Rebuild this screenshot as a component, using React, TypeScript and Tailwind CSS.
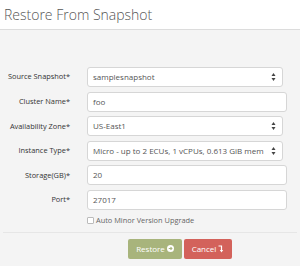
import React from "react";

const font = { fontFamily: '"Open Sans", "Liberation Sans", sans-serif' };

function Arrows() {
  return (
    <svg width="5" height="9" viewBox="0 0 5 9" className="absolute right-[6px] top-1/2 -translate-y-1/2">
      <path d="M2.5 0.5 L4.5 3.5 L0.5 3.5 Z" fill="#444" />
      <path d="M2.5 8.5 L4.5 5.5 L0.5 5.5 Z" fill="#444" />
    </svg>
  );
}

function Row({ label, value, select, width }: { label: string; value: string; select?: boolean; width: string }) {
  return (
    <div className="flex items-center h-[20px]">
      <div className="w-[70px] text-right text-[7.4px] font-normal text-[#333] whitespace-nowrap">{label}</div>
      <div className={`ml-[17px] relative h-[20px] ${width} bg-white border border-[#d6d6d6] rounded-[3px] flex items-center pl-[5px] text-[8px] text-[#555] whitespace-nowrap overflow-hidden`}>
        {value}
        {select && <Arrows />}
      </div>
    </div>
  );
}

export default function App() {
  return (
    <div className="w-[300px] h-[266px] bg-[#f4f4f4] overflow-hidden flex flex-col" style={font}>
      <div className="h-[30px] bg-white border-b border-[#dcdcdc] flex items-center pl-[4px] shrink-0">
        <span className="text-[14px] font-light text-[#555] leading-none">Restore From Snapshot</span>
      </div>
      <div className="flex flex-col pt-[37px] gap-[4.6px]">
        <Row label="Source Snapshot*" value="samplesnapshot" select width="w-[196px]" />
        <Row label="Cluster Name*" value="foo" width="w-[200px]" />
        <Row label="Availability Zone*" value="US-East1" select width="w-[196px]" />
        <Row label="Instance Type*" value="Micro - up to 2 ECUs, 1 vCPUs, 0.613 GiB mem" select width="w-[196px]" />
        <Row label="Storage(GB)*" value="20" width="w-[200px]" />
        <Row label="Port*" value="27017" width="w-[200px]" />
      </div>
      <div className="flex items-center ml-[87px] mt-[7px] h-[8px]">
        <div className="w-[7px] h-[7px] border border-[#bbb] rounded-[1px] bg-white" />
        <span className="ml-[2px] text-[7.4px] text-[#666] leading-none">Auto Minor Version Upgrade</span>
      </div>
      <div className="mt-[7px] mx-[3px] border-t border-[#e6e6e6]" />
      <div className="flex ml-[128px] mt-[6px] gap-[2px]">
        <div className="h-[20px] w-[54px] bg-[#a8b47c] rounded-[2px] flex items-center justify-center text-white text-[8px]">
          Restore
          <svg width="7" height="7" viewBox="0 0 10 10" className="ml-[2px]">
            <circle cx="5" cy="5" r="5" fill="#fff" />
            <path d="M2.5 5 H7 M5 3 L7 5 L5 7" stroke="#a8b47c" strokeWidth="1.5" fill="none" />
          </svg>
        </div>
        <div className="h-[20px] w-[48px] bg-[#d3625b] rounded-[2px] flex items-center justify-center text-white text-[8px]">
          Cancel
          <svg width="6" height="8" viewBox="0 0 6 8" className="ml-[2px]">
            <path d="M0.5 1 H3.5 V6" stroke="#fff" strokeWidth="1.2" fill="none" />
            <path d="M1.8 5 L3.5 7.5 L5.2 5 Z" fill="#fff" />
          </svg>
        </div>
      </div>
    </div>
  );
}
